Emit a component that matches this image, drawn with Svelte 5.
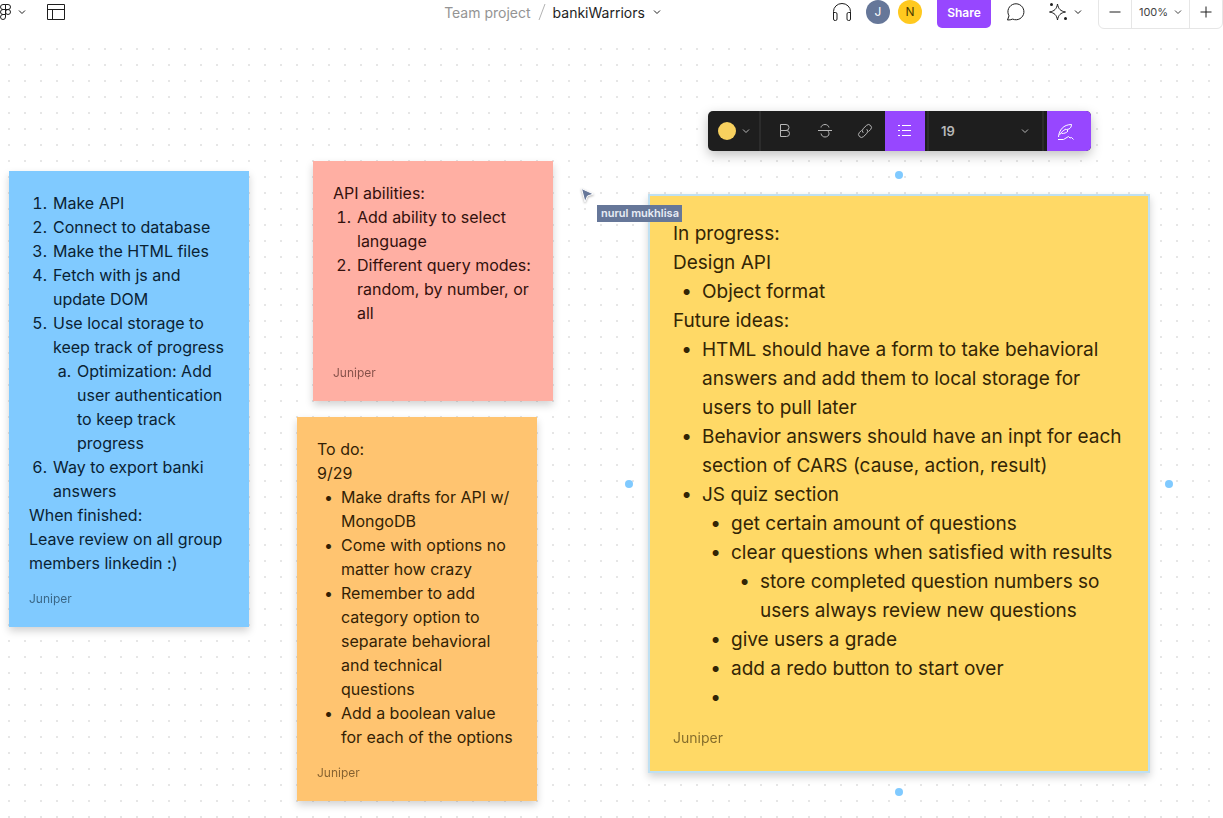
<script>
  let size = $state('19');
</script>

{#snippet chevron()}
  <svg class="chevron" width="8" height="8" viewBox="0 0 8 8" aria-hidden="true"><path d="M1 2.5 4 5.5 7 2.5" /></svg>
{/snippet}

<div class="board">
  <header>
    <div class="group left">
      <button class="menu" aria-label="Main menu">
        <svg width="18" height="18" viewBox="0 0 18 18" aria-hidden="true">
          <path d="M9.5 1.5H7a2.5 2.5 0 0 0 0 5h2.5zM9.5 1.5H12a2.5 2.5 0 0 1 0 5H9.5zM9.5 6.5H7a2.5 2.5 0 0 0 0 5h2.5zM9.5 11.5H7A2.5 2.5 0 1 0 9.5 14z" />
          <circle cx="12" cy="9" r="2.5" />
        </svg>
        {@render chevron()}
      </button>
      <button aria-label="Templates">
        <svg width="18" height="18" viewBox="0 0 18 18" aria-hidden="true"><path d="M.5 1.5h17v15H.5zM.5 6.5h17M5.5 6.5v10" /></svg>
      </button>
    </div>

    <nav class="title" aria-label="File">
      <a href="#project">Team project</a>
      <svg width="8" height="18" viewBox="0 0 8 18" class="slash" aria-hidden="true"><path d="M7 1 1 17" /></svg>
      <button class="file">bankiWarriors {@render chevron()}</button>
    </nav>

    <div class="group right">
      <button aria-label="Audio">
        <svg width="20" height="20" viewBox="0 0 20 20" aria-hidden="true">
          <path d="M1.5 16V9.5a8.5 8 0 0 1 17 0V16M1.5 10.5h2A1.5 1.5 0 0 1 5 12v5a1.5 1.5 0 0 1-1.5 1.5H3A1.5 1.5 0 0 1 1.5 17zM18.5 10.5h-2A1.5 1.5 0 0 0 15 12v5a1.5 1.5 0 0 0 1.5 1.5h.5a1.5 1.5 0 0 0 1.5-1.5z" />
        </svg>
      </button>
      <div class="people">
        <span class="avatar slate">J</span>
        <span class="avatar gold">N</span>
      </div>
      <button class="share">Share</button>
      <button class="comment" aria-label="Comments">
        <svg width="20" height="20" viewBox="0 0 20 20" aria-hidden="true"><path d="M1.5 18 3 13.8a8 8 0 1 1 3.7 3.3C5 17.8 3.5 18 1.5 18z" /></svg>
      </button>
      <button class="magic" aria-label="AI tools">
        <svg width="20" height="20" viewBox="0 0 20 20" aria-hidden="true">
          <path d="M9.5 2C10.4 7 12.5 9.1 17.5 10c-5 .9-7.100 3-8 8-.9-5-3-7.100-8-8 5-.9 7.100-3 8-8z" />
          <circle class="fill" cx="3.500" cy="2.500" r="1.500" /><circle class="fill" cx="17.500" cy="16.500" r="1.500" />
        </svg>
        {@render chevron()}
      </button>
      <div class="zoom">
        <button aria-label="Zoom out"><svg width="12" height="12" viewBox="0 0 12 12" aria-hidden="true"><path d="M.5 6h11" /></svg></button>
        <button class="level">100% {@render chevron()}</button>
        <button aria-label="Zoom in"><svg width="12" height="12" viewBox="0 0 12 12" aria-hidden="true"><path d="M.5 6h11M6 .5v11" /></svg></button>
      </div>
    </div>
  </header>

  <main>
    <article class="note blue">
      <div class="text">
        <ol>
          <li>Make API</li>
          <li>Connect to database</li>
          <li>Make the HTML files</li>
          <li>Fetch with js and update DOM</li>
          <li>Use local storage to keep track of progress
            <ol class="alpha"><li>Optimization: Add user authentication to keep track progress</li></ol>
          </li>
          <li>Way to export banki answers</li>
        </ol>
        <p>When finished:</p>
        <p>Leave review on all group members linkedin :)</p>
      </div>
      <footer>Juniper</footer>
    </article>

    <article class="note red">
      <div class="text">
        <p>API abilities:</p>
        <ol>
          <li>Add ability to select language</li>
          <li>Different query modes: random, by number, or all</li>
        </ol>
      </div>
      <footer>Juniper</footer>
    </article>

    <article class="note orange">
      <div class="text">
        <p>To do:</p>
        <p>9/29</p>
        <ul>
          <li>Make drafts for API w/ MongoDB</li>
          <li>Come with options no matter how crazy</li>
          <li>Remember to add category option to separate behavioral and technical questions</li>
          <li>Add a boolean value for each of the options</li>
        </ul>
      </div>
      <footer>Juniper</footer>
    </article>

    <article class="note yellow">
      <div class="text">
        <p>In progress:</p>
        <p>Design API</p>
        <ul><li>Object format</li></ul>
        <p>Future ideas:</p>
        <ul>
          <li>HTML should have a form to take behavioral answers and add them to local storage for users to pull later</li>
          <li>Behavior answers should have an inpt for each section of CARS (cause, action, result)</li>
          <li>JS quiz section
            <ul>
              <li>get certain amount of questions</li>
              <li>clear questions when satisfied with results
                <ul><li>store completed question numbers so users always review new questions</li></ul>
              </li>
              <li>give users a grade</li>
              <li>add a redo button to start over</li>
              <li></li>
            </ul>
          </li>
        </ul>
      </div>
      <footer>Juniper</footer>
      <i class="handle north"></i>
      <i class="handle east"></i>
      <i class="handle south"></i>
      <i class="handle west"></i>
    </article>

    <div class="toolbar" role="toolbar" aria-label="Text formatting">
      <button class="color" aria-label="Note color"><span class="swatch"></span>{@render chevron()}</button>
      <div class="styles">
        <button aria-label="Bold"><svg width="16" height="16" viewBox="0 0 16 16" aria-hidden="true"><path d="M3.5 1.5h5.500a3 3 0 0 1 0 6H3.500zM3.500 7.500h6a3 3 0 0 1 0 6h-6z" /></svg></button>
        <button aria-label="Strikethrough"><svg width="16" height="16" viewBox="0 0 16 16" aria-hidden="true"><path d="M1 7.500h14M12 4.500C11.500 2.500 10 1.500 8 1.500S4 2.800 4 4.500M4 10.500c.5 2.300 2 3.500 4 3.500s4-1.200 4-3.200c0-1.300-.5-2.300-1.500-3.300" /></svg></button>
        <button aria-label="Link"><svg width="16" height="16" viewBox="0 0 16 16" aria-hidden="true"><path d="M6.200 9.800a3 3 0 0 1 0-4.200l3.300-3.200a2.900 2.900 0 0 1 4.100 4.100L11.500 8.600M9.800 6.200a3 3 0 0 1 0 4.200l-3.300 3.200a2.900 2.900 0 0 1-4.100-4.100l2.100-2.100" /></svg></button>
        <button class="on" aria-label="Bulleted list"><svg width="16" height="16" viewBox="0 0 16 16" aria-hidden="true"><path d="M5 2.500h9M5 7.500h9M5 12.500h9M1 2.500h2M1 7.500h2M1 12.500h2" /></svg></button>
      </div>
      <label class="size">
        <select aria-label="Font size" bind:value={size}><option>19</option><option>16</option><option>24</option></select>
        {@render chevron()}
      </label>
      <button class="on author" aria-label="Show author"><svg width="18" height="18" viewBox="0 0 18 18" aria-hidden="true"><path d="M1.500 15C2 8 6.500 2.500 14.500 2.500c0 2-.8 3.500-2.500 4.500L9.500 7.500l1.500 1.500c-1.500 2-4 2.500-6.500 2.500M9 7C6 8.500 4 10.500 2.500 13M1 17.500h5.500l5-3 1.500 1.500 1.500-.5 2 2" /></svg></button>
    </div>

    <div class="cursor">
      <svg width="16" height="18" viewBox="0 0 16 18" aria-hidden="true"><path d="M1.500 1.500 13.500 7 7.500 9 5 15z" /></svg>
      <span>nurul mukhlisa</span>
    </div>
  </main>
</div>

<style>
  :global(body) {
    margin: 0;
    overflow: hidden;
  }
  .board {
    position: relative;
    min-height: 100vh;
    overflow: hidden;
    background: conic-gradient(from 90deg at 14px 14px, #e6e6e6 90deg, transparent 0) -6px -14px / 16px 16px #fff;
    font-family: Inter, sans-serif;
    color: #1e1e1e;
  }
  button {
    display: flex;
    align-items: center;
    justify-content: center;
    padding: 0;
    border: 0;
    background: none;
    font: inherit;
    color: inherit;
  }
  svg {
    flex: none;
    fill: none;
    stroke: currentColor;
  }
  .fill {
    fill: currentColor;
    stroke: none;
  }

  header {
    position: relative;
    display: flex;
    align-items: center;
    height: 52px;
    margin-top: -14px;
    background: #fff;
    font-size: 14px;
  }
  .group {
    display: flex;
    align-items: center;
  }
  .left {
    gap: 21px;
  }
  .menu {
    gap: 4px;
    margin-left: -4px;
  }
  .title {
    display: flex;
    flex: 1;
    align-items: center;
    justify-content: center;
    gap: 7px;
    padding-left: 208px;
    white-space: nowrap;
  }
  .title a {
    color: #949494;
    text-decoration: none;
  }
  .slash {
    color: #b3b3b3;
  }
  .file {
    gap: 8px;
  }
  .people {
    display: flex;
    gap: 8px;
    margin: 0 15px 0 14px;
  }
  .avatar {
    width: 24px;
    border-radius: 50%;
    line-height: 24px;
    text-align: center;
    font-size: 12px;
  }
  .slate {
    background: #667799;
    color: #fff;
  }
  .gold {
    background: #ffc91f;
    color: #4d3c00;
  }
  .share {
    width: 54px;
    height: 32px;
    border-radius: 5px;
    background: #9747ff;
    color: #fff;
    font-size: 12px;
    font-weight: 600;
  }
  .comment {
    margin: 0 22px 0 15px;
  }
  .magic {
    gap: 6px;
    margin-right: 16px;
  }
  .zoom {
    display: flex;
    height: 32px;
    border: 1px solid #e6e6e6;
    border-radius: 6px;
  }
  .zoom button {
    width: 32px;
  }
  .zoom .level {
    gap: 6px;
    width: 59px;
    border: solid #e6e6e6;
    border-width: 0 1px;
    font-size: 11px;
    color: #444;
  }

  .note {
    position: absolute;
    display: flex;
    flex-direction: column;
    box-sizing: border-box;
    width: 240px;
    min-height: 240px;
    padding: 20px;
    font-size: 16px;
    line-height: 24px;
    box-shadow: 0 4px 8px rgb(0 0 0 / 18%);
  }
  .text {
    flex: 1;
  }
  p,
  ol,
  ul {
    margin: 0;
    padding: 0;
    list-style: none;
  }
  li {
    margin-left: 24px;
    counter-increment: item;
  }
  ol {
    counter-reset: item;
  }
  li::before {
    content: counter(item) '.';
    display: inline-block;
    box-sizing: border-box;
    width: 24px;
    margin-left: -24px;
    padding-right: 6px;
    text-align: right;
    font-variant-numeric: tabular-nums;
  }
  .alpha > li::before {
    content: counter(item, lower-alpha) '.';
  }
  ul > li::before {
    content: '•';
    padding-right: 8px;
  }
  footer {
    margin-top: 16px;
    font-size: 12px;
    line-height: 16px;
    opacity: 0.6;
  }
  .blue {
    left: 9px;
    top: 171px;
    background: #80caff;
    color: #0a2233;
  }
  .red {
    left: 313px;
    top: 161px;
    background: #ffafa3;
    color: #33110d;
  }
  .orange {
    left: 297px;
    top: 417px;
    background: #ffc470;
    color: #331f05;
  }
  .yellow {
    left: 648px;
    top: 194px;
    width: 502px;
    padding: 23px 23px 24px;
    border: 2px solid #bfe0f2;
    background: #ffd966;
    color: #332505;
    font-size: 19px;
    line-height: 29px;
  }
  .yellow li {
    margin-left: 29px;
  }
  .yellow li::before {
    width: 29px;
    margin-left: -29px;
    padding-right: 10px;
  }
  .yellow footer {
    margin-top: 17px;
    font-size: 14px;
    line-height: 18px;
  }
  .handle {
    position: absolute;
    width: 8px;
    height: 8px;
    border-radius: 50%;
    background: #80caff;
  }
  .north,
  .south {
    left: calc(50% - 4px);
  }
  .east,
  .west {
    top: calc(50% - 4px);
  }
  .north {
    top: -25px;
  }
  .south {
    bottom: -25px;
  }
  .east {
    right: -25px;
  }
  .west {
    left: -25px;
  }

  .toolbar {
    position: absolute;
    left: 708px;
    top: 111px;
    display: flex;
    height: 40px;
    overflow: hidden;
    border-radius: 5px;
    background: #1e1e1e;
    color: #b8b8b8;
    box-shadow: 0 4px 12px rgb(0 0 0 / 25%);
  }
  .color {
    gap: 6px;
    width: 51px;
    border-right: 2px solid #2c2c2c;
    box-sizing: content-box;
  }
  .swatch {
    width: 18px;
    height: 18px;
    border-radius: 50%;
    background: #f7d05e;
  }
  .styles {
    display: flex;
    padding: 0 2px 0 4px;
  }
  .styles button {
    width: 40px;
  }
  .toolbar .on {
    background: #9747ff;
    color: #fff;
  }
  .size {
    display: flex;
    align-items: center;
    width: 88px;
    padding: 0 13px 0 12px;
    border: solid #2c2c2c;
    border-width: 0 2px;
    margin-right: 3px;
  }
  .size select {
    flex: 1;
    padding: 0;
    border: 0;
    appearance: none;
    background: none;
    color: inherit;
    font: 600 13px Inter, sans-serif;
  }
  .author {
    width: 44px;
    padding-right: 7px;
  }
  .cursor {
    position: absolute;
    left: 580px;
    top: 187px;
    display: flex;
    align-items: flex-start;
  }
  .cursor svg {
    fill: #667799;
    stroke: #fff;
    filter: drop-shadow(0 1px 1px rgb(0 0 0 / 30%));
  }
  .cursor span {
    margin: 18px 0 0 1px;
    padding: 0 3px 0 4px;
    background: #667799;
    color: #e8ecf5;
    font-size: 11px;
    font-weight: 600;
    line-height: 17px;
  }
</style>
